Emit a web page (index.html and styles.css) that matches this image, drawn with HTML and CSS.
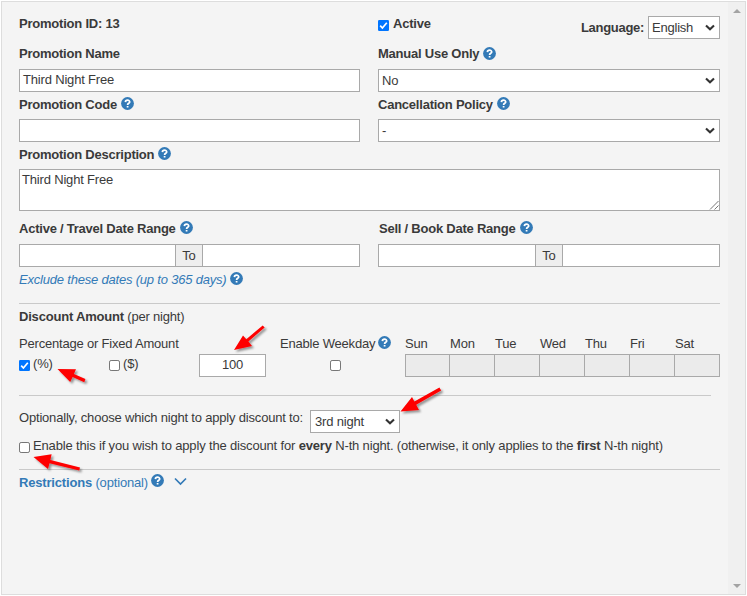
FILE: index.html
```html
<!DOCTYPE html>
<html lang="en">
<head>
<meta charset="utf-8">
<title>Promotion</title>
<link rel="stylesheet" href="styles.css">
</head>
<body>
<svg class="defs" width="0" height="0">
  <defs>
    <symbol id="help" viewBox="0 0 13 13"><circle cx="6.5" cy="6.5" r="6.4" fill="#337ab7"/><path d="M4.4 5.1C4.5 2.5 8.7 2.6 8.7 4.9C8.7 6.3 6.6 6.3 6.6 7.9M6.6 8.9V10.6" fill="none" stroke="#fff" stroke-width="1.75"/></symbol>
    <symbol id="chev" viewBox="0 0 10 7"><path d="M1 1.4L5 5.2L9 1.4" fill="none" stroke="#333" stroke-width="2.1"/></symbol>
    <symbol id="on" viewBox="0 0 11 11"><rect width="11" height="11" rx="1.2" fill="#0075ff"/><path d="M2.2 5.7L4.4 8L8.8 2.8" fill="none" stroke="#fff" stroke-width="1.7"/></symbol>
    <symbol id="off" viewBox="0 0 11 11"><rect x=".5" y=".5" width="10" height="10" rx="1.6" fill="#fff" stroke="#767676"/></symbol>
    <filter id="shadow" x="-30%" y="-30%" width="180%" height="180%"><feDropShadow dx="2" dy="2" stdDeviation="1.2" flood-color="#000" flood-opacity=".4"/></filter>
  </defs>
</svg>
<div class="panel">
  <main class="form">
    <div class="cols header">
      <b>Promotion ID: 13</b>
      <div class="between">
        <label class="active"><svg class="check"><use href="#on"/></svg><b>Active</b></label>
        <div class="lang"><b>Language:</b><div class="field select lang-select">English<svg class="chev"><use href="#chev"/></svg></div></div>
      </div>
    </div>
    <div class="cols">
      <div><div class="label first">Promotion Name</div><div class="field">Third Night Free</div></div>
      <div><div class="label first">Manual Use Only<svg class="help"><use href="#help"/></svg></div><div class="field select">No<svg class="chev"><use href="#chev"/></svg></div></div>
    </div>
    <div class="cols">
      <div><div class="label">Promotion Code<svg class="help"><use href="#help"/></svg></div><div class="field"></div></div>
      <div><div class="label">Cancellation Policy<svg class="help"><use href="#help"/></svg></div><div class="field select">-<svg class="chev"><use href="#chev"/></svg></div></div>
    </div>
    <div class="label">Promotion Description<svg class="help"><use href="#help"/></svg></div>
    <div class="field area">Third Night Free<svg class="grip" viewBox="0 0 10 10"><path d="M1 9.5L9.5 1M5.5 9.5L9.5 5.5" stroke="#777" fill="none"/></svg></div>
    <div class="cols">
      <div><div class="label tall">Active / Travel Date Range<svg class="help"><use href="#help"/></svg></div>
        <div class="range travel"><div class="field"></div><span class="to">To</span><div class="field"></div></div></div>
      <div><div class="label tall sell">Sell / Book Date Range<svg class="help"><use href="#help"/></svg></div>
        <div class="range"><div class="field"></div><span class="to">To</span><div class="field"></div></div></div>
    </div>
    <div class="exclude"><i>Exclude these dates (up to 365 days)</i><svg class="help"><use href="#help"/></svg></div>
    <section class="discount">
      <div class="title"><b>Discount Amount</b> (per night)</div>
      <div class="amounts">
        <div><div class="cap">Percentage or Fixed Amount</div>
          <div class="kinds"><label><svg class="check"><use href="#on"/></svg>(%)</label><label><svg class="check"><use href="#off"/></svg>($)</label></div></div>
        <div class="value"><div class="field">100</div></div>
        <div class="weekday"><div class="cap">Enable Weekday<svg class="help"><use href="#help"/></svg></div><svg class="check"><use href="#off"/></svg></div>
        <div class="days">
          <div><div class="cap">Sun</div><div class="cell"></div></div>
          <div><div class="cap">Mon</div><div class="cell"></div></div>
          <div><div class="cap">Tue</div><div class="cell"></div></div>
          <div><div class="cap">Wed</div><div class="cell"></div></div>
          <div><div class="cap">Thu</div><div class="cell"></div></div>
          <div><div class="cap">Fri</div><div class="cell"></div></div>
          <div><div class="cap">Sat</div><div class="cell"></div></div>
        </div>
      </div>
    </section>
    <section class="nights">
      <div class="choose"><span>Optionally, choose which night to apply discount to:</span><div class="field select">3rd night<svg class="chev"><use href="#chev"/></svg></div></div>
      <label class="every"><svg class="check"><use href="#off"/></svg><span>Enable this if you wish to apply the discount for <b>every</b> N-th night. (otherwise, it only applies to the <b>first</b> N-th night)</span></label>
    </section>
    <div class="restrictions"><span><b>Restrictions</b> (optional)</span><svg class="help"><use href="#help"/></svg><svg class="expand" viewBox="0 0 13 9"><path d="M1 1.5L6.5 7L12 1.5" fill="none" stroke="#337ab7" stroke-width="1.7"/></svg></div>
  </main>
  <div class="scrollbar"><i class="up"></i><i class="down"></i></div>
</div>
<svg class="arrows" viewBox="0 0 747 596">
  <g fill="#fe0000" filter="url(#shadow)">
    <path d="M234 350L243 335.4L246.3 339.2L262.7 325.4L264.7 327.6L248.4 341.6L252 346Z"/>
    <path d="M57.5 369L76 369.3L73.9 374L85.4 379L84.3 382.2L72.6 377L70.2 382Z"/>
    <path d="M400.5 411.5L412 397L414.4 401.6L439.4 387.4L441.2 390.4L416.2 404.8L419 410Z"/>
    <path d="M33.5 457L51.6 454.3L50.4 459.9L80 467.4L79.2 470.6L49.5 463.2L48 469Z"/>
  </g>
</svg>
</body>
</html>
```
FILE: styles.css
```css
* { box-sizing: border-box; }
body { margin: 0; background: #fff; color: #3a3a3a; font: 13px "Liberation Sans", Arial, sans-serif; letter-spacing: -.175px; white-space: nowrap; }
svg { flex: none; display: block; }
.defs { position: absolute; }
.panel { display: flex; width: 745px; height: 594px; margin: 1px 0 0 1px; border: 1px solid #ddd; background: #f4f4f4; }
.form { width: 726px; padding: 0 8px 0 17px; }
.cols { display: grid; grid-template-columns: 341px 342px; column-gap: 18px; }
.header { height: 40px; line-height: 43px; letter-spacing: -.22px; }
.between, .lang, .active { display: flex; }
.between { justify-content: space-between; }
.active .check { margin: 18px 4px 0 0; }
.lang { padding-top: 14px; line-height: 23px; gap: 4px; }
.lang b { letter-spacing: -.3px; }
.lang-select { width: 72px; }
.check { width: 11px; height: 11px; }
.help { width: 13px; height: 13px; margin: 0 0 2px 4px; }
.label { display: flex; align-items: center; height: 27px; padding-bottom: 2px; font-weight: bold; letter-spacing: -.23px; }
.first { padding-bottom: 4px; }
.first .help { margin-bottom: 1px; }
.tall { height: 33px; padding-top: 1px; padding-bottom: 0; }
.sell { padding-left: 1px; }
.field { height: 23px; border: 1px solid #a9a9a9; background: #fff; padding: 0 3px; line-height: 20px; }
.select { display: flex; justify-content: space-between; align-items: center; padding: 0 4px 0 3px; }
.chev { width: 10px; height: 7px; }
.area { position: relative; height: 42px; padding-left: 2px; }
.grip { position: absolute; right: 0; bottom: 0; width: 10px; height: 10px; }
.range { display: grid; grid-template-columns: 158px 26px 158px; }
.travel { grid-template-columns: 157px 26px 158px; }
.to { border: solid #a9a9a9; border-width: 1px 0; background: #eee; text-align: center; line-height: 21px; }
.exclude { display: flex; align-items: center; height: 36px; padding-bottom: 11px; color: #337ab7; letter-spacing: -.2px; }
.discount { height: 92px; border-top: 1px solid #c9c9c9; }
.title { height: 24px; line-height: 26px; letter-spacing: -.2px; }
.amounts { display: grid; grid-template-columns: 180px 81px 125px 315px; }
.cap { display: flex; height: 26px; line-height: 31px; letter-spacing: -.2px; }
.cap .help { margin-top: 8px; margin-left: 3px; }
.kinds { display: grid; grid-template-columns: 90px 90px; line-height: 20px; }
.kinds label { display: flex; gap: 3px; }
.kinds .check { margin-top: 6px; }
.value { padding-top: 26px; }
.value .field { width: 67px; text-align: center; }
.weekday .check { margin: 6px 0 0 50px; }
.days { display: grid; grid-template-columns: 44px repeat(6, 45px) 1px; }
.cell { height: 23px; border: 1px solid #a9a9a9; border-right: 0; background: #ebebeb; }
.days .cap { padding-left: 1px; }
.days > :first-child .cap { padding-left: 0; }
.days > :last-child { width: 46px; }
.days > :last-child .cell { border-right: 1px solid #a9a9a9; }
.nights { height: 74px; }
.nights::before { content: ""; display: block; width: 692px; border-top: 1px solid #c9c9c9; }
.choose { display: flex; gap: 6px; height: 39px; padding-top: 14px; line-height: 16px; }
.choose > span { width: 285px; letter-spacing: -.19px; }
.choose .select { width: 90px; padding-left: 4px; }
.every { display: flex; gap: 3px; line-height: 22px; letter-spacing: -.165px; }
.every .check { margin-top: 7px; }
.restrictions { display: flex; border-top: 1px solid #c9c9c9; color: #337ab7; line-height: 26px; }
.restrictions .help { margin: 4px 0 0 3px; }
.expand { width: 13px; height: 9px; margin: 7px 0 0 10px; }
.scrollbar { display: flex; flex-direction: column; justify-content: space-between; align-items: center; width: 17px; padding: 7px 0 6px; background: #f0f0f0; }
.up, .down { border: 4px solid transparent; }
.up { border-top: 0; border-bottom-color: #a3a3a3; }
.down { border-bottom: 0; border-top-color: #a3a3a3; }
.arrows { position: absolute; left: 0; top: 0; width: 747px; height: 596px; pointer-events: none; }
```
